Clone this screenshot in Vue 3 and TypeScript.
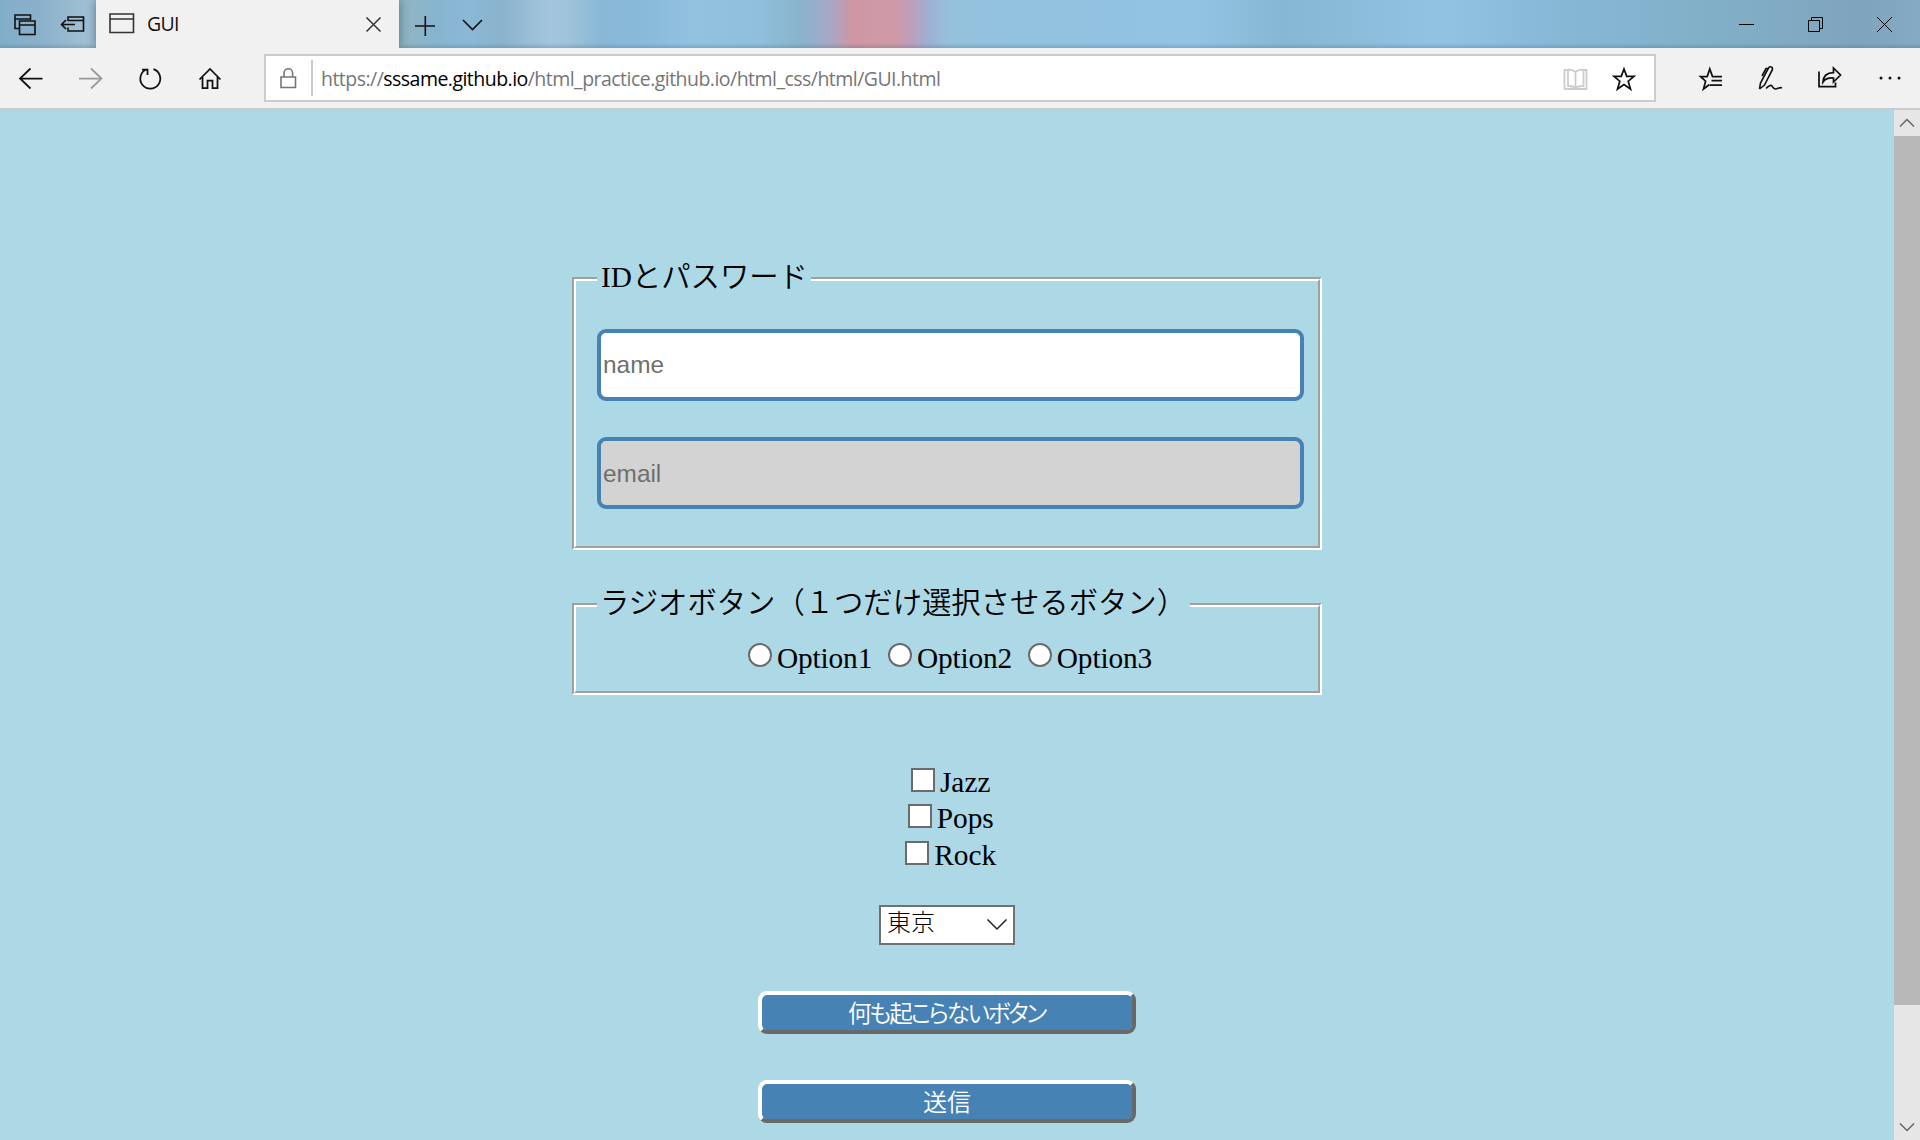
<script setup lang="ts">
interface Choice {
  id: string
  label: string
}

const radios: Choice[] = [
  { id: 'opt1', label: 'Option1' },
  { id: 'opt2', label: 'Option2' },
  { id: 'opt3', label: 'Option3' },
]

const genres: Choice[] = [
  { id: 'jazz', label: 'Jazz' },
  { id: 'pops', label: 'Pops' },
  { id: 'rock', label: 'Rock' },
]
</script>

<template>
  <div class="window">
    <header class="titlebar">
      <svg class="cell48" viewBox="0 0 48 48">
        <path d="M19 28.500H15V15H30.500V20M15 19H30.500M19.500 21H35V34.500H19.500ZM19.500 25H35" />
      </svg>
      <svg class="cell48" viewBox="48 0 48 48">
        <path d="M68 21V17H83.500V31H68V27.500M68 20.500H83.500M61.500 24.500H75M66 20L61.500 24.500L66 29" />
      </svg>
      <div class="tab">
        <svg class="tab-page" viewBox="108 12 28 24">
          <path d="M110 14H133.500V32.500H110ZM110 19H133.500" />
        </svg>
        <span class="tab-title">GUI</span>
        <svg class="tab-close" viewBox="364 15 20 20">
          <path d="M366.500 17.500L380.500 31.500M380.500 17.500L366.500 31.500" />
        </svg>
      </div>
      <svg class="cell48 plus" viewBox="401 0 48 48">
        <path d="M415 26H435M425.300 16V36" />
      </svg>
      <svg class="cell48" viewBox="449 0 48 48">
        <path d="M463 20L472.500 29.500L482 20" />
      </svg>
      <div class="controls">
        <svg viewBox="1712 0 69 48"><path d="M1739 24.500H1754" /></svg>
        <svg viewBox="1781 0 69 48">
          <path d="M1808.500 20.500H1819.500V31.500H1808.500ZM1811.500 20V17.500H1822.500V28.500H1820" />
        </svg>
        <svg viewBox="1850 0 69 48"><path d="M1877 17L1892 32M1892 17L1877 32" /></svg>
      </div>
    </header>

    <nav class="toolbar">
      <svg class="cell60" viewBox="1 48 60 60"><path d="M42.500 78.500H20M30.500 68.500L20 78.500L30.500 88.500" /></svg>
      <svg class="cell60 off" viewBox="61 48 60 60"><path d="M79 78.500H101.500M91 68.500L101.500 78.500L91 88.500" /></svg>
      <svg class="cell60" viewBox="121 48 60 60">
        <path d="M153.500 69.200A10 10 0 1 1 146.800 69.300M142 69.500H147.500V75" />
      </svg>
      <svg class="cell60" viewBox="181 48 60 60">
        <path d="M199.500 79.500L210 69L220.500 79.500M202.500 77V88H207.500V80.500H212.500V88H217.500V77" />
      </svg>
      <div class="address">
        <svg class="lock" viewBox="266 56 45 44">
          <path d="M281 77H295.500V87.500H281ZM284 77V73A4.300 4.300 0 0 1 292.600 73V77" />
        </svg>
        <span class="divider"></span>
        <span class="url">https://<b>sssame.github.io</b>/html_practice.github.io/html_css/html/GUI.html</span>
        <svg class="book" viewBox="1551 56 48 44">
          <path d="M1567 70H1564.500V89H1586.500V70H1584M1575.500 72V88M1575.500 72Q1573 69.500 1568 69.700V86Q1573 85.800 1575.500 88Q1578 85.800 1583.500 86V69.700Q1578 69.500 1575.500 72" />
        </svg>
        <svg class="star" viewBox="1599 56 48 44">
          <path d="M1624 69L1626.700 76.300H1634L1628.200 81.200L1630.500 89L1624 84.500L1617.500 89L1619.800 81.200L1614 76.300H1621.300Z" />
        </svg>
      </div>
      <div class="tools">
        <svg class="cell60" viewBox="1680 48 60 60">
          <path d="M1722 76.500H1712.500L1709.800 69L1707.200 76.500H1700.500L1705.600 81.200L1703.500 89L1709.500 84.500M1711.500 80.500H1722M1710 85H1722" />
        </svg>
        <svg class="cell60 pen" viewBox="1740 48 60 60">
          <path d="M1759.500 89L1760.500 83L1768.500 68Q1770 66 1771.600 67.200Q1773 68.500 1772.200 70L1764.500 85L1759.500 89M1768.500 68.500L1766 68.500L1762 76M1766 88.500C1768.500 86 1771 84.500 1772 86C1773 88 1774 89.500 1776.500 88.800C1779 88 1780 87 1782 88" />
        </svg>
        <svg class="cell60" viewBox="1800 48 60 60">
          <path d="M1819 71.500V86.500H1835.500V82.500M1823 82Q1823.500 72.500 1833.500 72.500V68L1840.500 75L1833.500 82V78Q1826 77.500 1823 82Z" />
        </svg>
        <svg class="cell60 dots" viewBox="1860 48 60 60">
          <circle cx="1881" cy="78" r="1.500" /><circle cx="1890" cy="78" r="1.500" /><circle cx="1899" cy="78" r="1.500" />
        </svg>
      </div>
    </nav>

    <div class="viewport">
      <main class="page">
        <section class="group credentials">
          <div class="group-inner">
            <div class="legend">IDとパスワード</div>
            <div class="field">name</div>
            <div class="field shaded">email</div>
          </div>
        </section>

        <section class="group options">
          <div class="group-inner">
            <div class="legend">ラジオボタン（１つだけ選択させるボタン）</div>
            <div class="radio-row">
              <label v-for="r in radios" :key="r.id"><i class="radio"></i>{{ r.label }}</label>
            </div>
          </div>
        </section>

        <div class="checks">
          <label v-for="g in genres" :key="g.id"><i class="box"></i>{{ g.label }}</label>
        </div>

        <div class="select">
          <span>東京</span>
          <svg viewBox="0 0 22 14"><path d="M1.500 1.500L11 11L20.500 1.500" /></svg>
        </div>

        <div class="button"><span class="narrow">何も起こらないボタン</span></div>
        <div class="button submit"><span>送信</span></div>
      </main>

      <aside class="scrollbar">
        <svg viewBox="0 0 26 26"><path d="M6 16.500L13 9.500L20 16.500" /></svg>
        <div class="thumb"></div>
        <svg class="down" viewBox="0 0 26 26"><path d="M6 9.500L13 16.500L20 9.500" /></svg>
      </aside>
    </div>
  </div>
</template>

<style>
body {
  margin: 0;
  overflow: hidden;
}
</style>

<style scoped>
.window {
  width: 1920px;
  height: 1140px;
  display: flex;
  flex-direction: column;
  overflow: hidden;
  background: #add8e6;
}
svg {
  display: block;
  flex: none;
  fill: none;
  stroke: #111;
  stroke-width: 1.6;
}
.cell48 {
  width: 48px;
  height: 48px;
}
.cell60 {
  width: 60px;
  height: 60px;
}
.titlebar {
  height: 48px;
  flex: none;
  display: flex;
  background:
    linear-gradient(to bottom, transparent 43px, rgba(60, 90, 120, 0.25) 48px),
    linear-gradient(to right, #82adc9 0, #8ab1cb 40px, #9fbed2 85px, #9fbed2 100px, #8db4bf 400px, #8fb5c4 412px,
      #86b4d0 435px, #8ab8d6 470px, #8ab2cc 500px, #a3c6dc 550px, #9fc3d9 568px, #88b8d6 600px, #88bad9 640px,
      #92c2e0 695px, #90bfdc 760px, #88b4cc 800px, #a5a8c6 829px, #ce96a3 852px, #cf9aa6 895px, #b9a0bd 913px,
      #9bb2d4 930px, #96c1dd 950px, #92c2e0 1010px, #92c3e2 1200px, #86b7d4 1285px, #91c3e2 1440px,
      #85b6d4 1580px, #82b0c9 1700px, #7fa5bd 1860px, #84aac4 1920px);
}
.tab {
  width: 303px;
  height: 48px;
  display: flex;
  background: #f1f1f1;
  box-shadow: 0 0 9px rgba(40, 70, 100, 0.6);
  clip-path: inset(0 -12px 0 -12px);
}
.tab-page {
  width: 28px;
  height: 24px;
  margin: 12px 0 0 12px;
  stroke: #333;
}
.tab-title {
  width: 60px;
  margin-left: 11px;
  font: 19.500px/48px "Open Sans", "Noto Sans", sans-serif;
  letter-spacing: -0.700px;
  color: #111;
}
.tab-close {
  width: 20px;
  height: 20px;
  margin: 15px 15px 0 auto;
  stroke: #333;
  stroke-width: 1.500;
}
.plus {
  margin-left: 2px;
}
.controls {
  display: flex;
  margin: 0 1px 0 auto;
}
.controls svg {
  width: 69px;
  height: 48px;
  stroke: #000;
  stroke-width: 1;
}
.toolbar {
  height: 60px;
  flex: none;
  display: flex;
  padding-left: 1px;
  background: #f1f1f1;
  border-bottom: 2px solid #ccc;
}
.toolbar svg {
  stroke-width: 1.750;
}
.toolbar .pen {
  stroke-width: 1.600;
}
.toolbar .off {
  stroke: #999;
}
.address {
  box-sizing: border-box;
  width: 1392px;
  height: 48px;
  margin: 6px 0 0 23px;
  display: flex;
  border: 2px solid #ccc;
  background: #fff;
}
.address .lock {
  width: 45px;
  height: 44px;
  stroke: #767676;
  stroke-width: 1.600;
}
.divider {
  width: 2px;
  height: 36px;
  margin-top: 4px;
  background: #ccc;
}
.url {
  width: 1230px;
  margin-left: 8px;
  flex: 1;
  font: 19.500px/46px "Open Sans", "Noto Sans", sans-serif;
  letter-spacing: -0.530px;
  white-space: nowrap;
  color: #767676;
}
.url b {
  font-weight: 400;
  color: #000;
}
.address .book,
.address .star {
  width: 48px;
  height: 44px;
}
.address .book {
  stroke: #ccc;
  stroke-width: 1.800;
}
.address .star {
  margin-right: 7px;
}
.tools {
  display: flex;
  margin-left: 24px;
}
.tools .dots {
  fill: #111;
  stroke: none;
}
.viewport {
  flex: 1;
  display: flex;
  min-height: 0;
}
.page {
  width: 1894px;
  display: flex;
  flex-direction: column;
  align-items: center;
  font: 29.330px/42px "Liberation Serif", "Noto Sans CJK JP", serif;
  color: #000;
}
.group {
  box-sizing: border-box;
  width: 750px;
  flex: none;
  border: 2px solid;
  border-color: #a0a0a0 #fff #fff #a0a0a0;
}
.group-inner {
  box-sizing: border-box;
  height: 100%;
  border: 2px solid;
  border-color: #fff #a0a0a0 #a0a0a0 #fff;
}
.credentials {
  height: 273px;
  margin-top: 167px;
}
.options {
  height: 92px;
  margin-top: 53px;
}
.legend {
  width: fit-content;
  height: 40px;
  margin: -24px 0 0 21px;
  padding: 0 3px 0 4px;
  font-family: "Liberation Serif", "Noto Sans CJK JP DemiLight", "Noto Sans CJK JP", serif;
  font-weight: 350;
  line-height: 40px;
  white-space: nowrap;
  background: #add8e6;
}
.options .legend {
  padding: 0 4px 0 3px;
}
.field {
  box-sizing: border-box;
  width: 707px;
  height: 72px;
  margin: 32px 0 0 21px;
  padding-left: 2px;
  border: 4px solid #4682b4;
  border-radius: 9px;
  background: #fff;
  font: 24.400px/63px "Liberation Sans", Arial, sans-serif;
  color: #6f6f6f;
}
.field.shaded {
  margin-top: 36px;
  line-height: 65px;
  background: #d3d3d3;
}
.radio-row {
  display: flex;
  justify-content: center;
  gap: 15.800px;
  margin-top: 14px;
  padding-left: 6px;
}
.radio-row label {
  letter-spacing: -0.150px;
}
.radio-row label,
.checks label {
  display: flex;
  gap: 5px;
}
.radio,
.box {
  box-sizing: border-box;
  width: 24px;
  height: 24px;
  border: 2px solid #6b6b6b;
  background: #fff;
}
.radio {
  margin-top: 6px;
  border-radius: 50%;
}
.checks {
  display: flex;
  flex-direction: column;
  align-items: center;
  margin-top: 68.700px;
  padding-left: 7.400px;
  line-height: 37.670px;
}
.checks label {
  height: 36.670px;
}
.box {
  margin-top: 3.900px;
}
.select {
  box-sizing: border-box;
  width: 136px;
  height: 40px;
  margin-top: 31.300px;
  padding: 0 5px 0 6px;
  display: flex;
  justify-content: space-between;
  border: 2px solid #707070;
  background: #fff;
  font: 300 24px/28px "Noto Sans CJK JP", sans-serif;
  color: #000;
}
.select svg {
  width: 22px;
  height: 14px;
  margin-top: 11px;
  stroke: #222;
  stroke-width: 1.500;
}
.button {
  box-sizing: border-box;
  width: 378px;
  height: 43px;
  margin-top: 46px;
  flex: none;
  display: flex;
  justify-content: center;
  border: 4px solid;
  border-color: #fff #696969 #696969 #fff;
  border-radius: 9px;
  background: #4682b4;
  background-clip: padding-box;
  font: 350 24px/34px "Noto Sans CJK JP DemiLight", "Noto Sans CJK JP", sans-serif;
  color: #fff;
}
.narrow {
  font-size: 23.600px;
  font-feature-settings: "palt";
  letter-spacing: -2.300px;
  margin-right: 1px;
  white-space: nowrap;
}
.scrollbar {
  width: 26px;
  display: flex;
  flex-direction: column;
  background: #e6e6e6;
}
.scrollbar svg {
  width: 26px;
  height: 26px;
  stroke: #666;
  stroke-width: 1.500;
}
.thumb {
  height: 869px;
  background: #b8b8b8;
}
.scrollbar .down {
  margin-top: auto;
}
</style>
